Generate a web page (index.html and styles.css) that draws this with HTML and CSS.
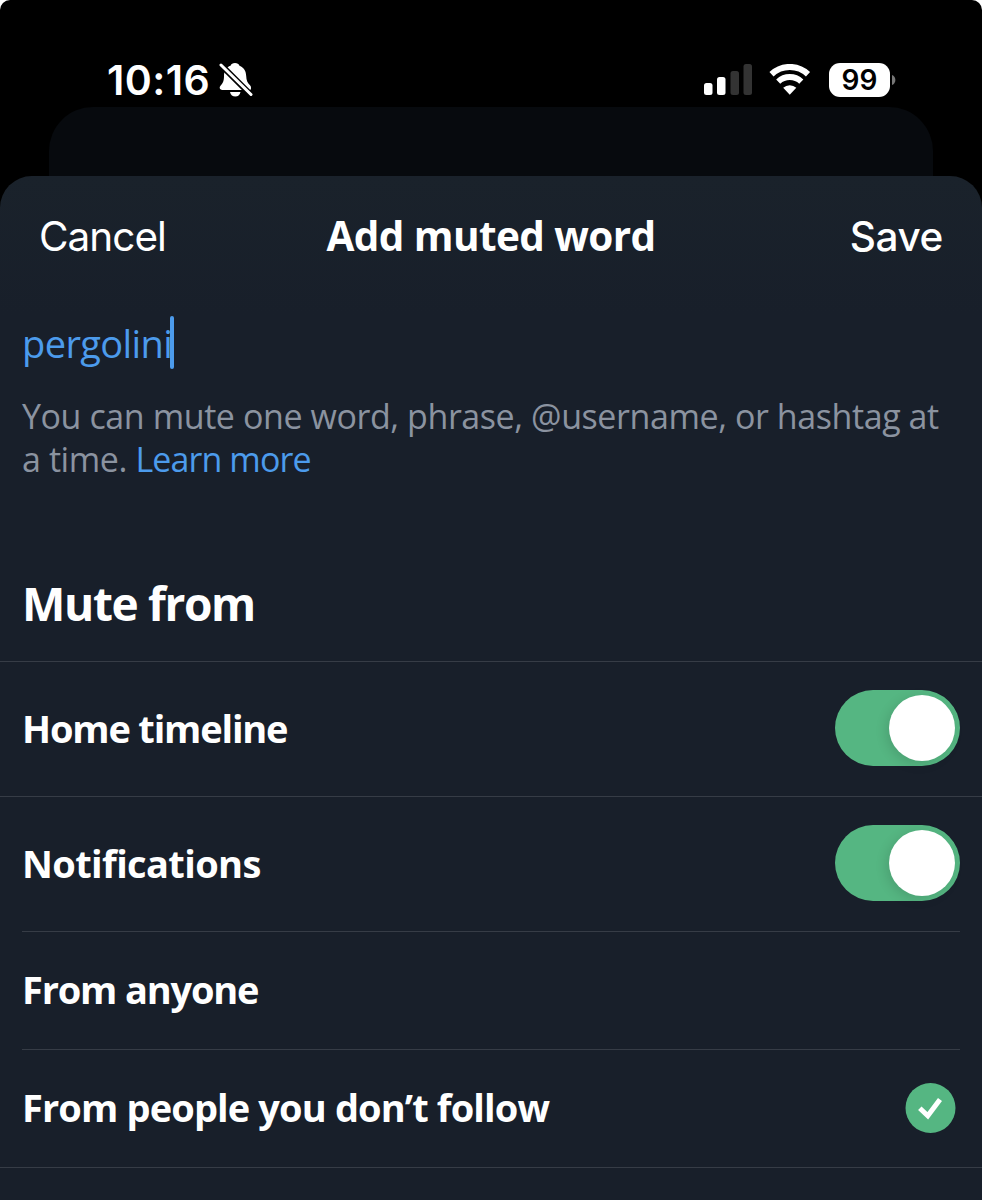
FILE: index.html
```html
<!DOCTYPE html>
<html lang="en">
<head>
    <meta charset="UTF-8">
    <meta name="viewport" content="width=device-width, initial-scale=1.0">
    <title>Add muted word</title>
    <link rel="stylesheet" href="styles.css">
</head>
<body>
    <div class="screen">
        <div class="status-bar">
            <div class="status-left">
                <span class="time">10:16</span>
                <!-- Silent mode bell -->
                <svg class="bell" width="34" height="36" viewBox="0 0 34 36">
                    <path fill="#fff" d="M16 1c2.300 0 3.800 1 4.500 2.700C25 5.500 27 9 27.200 14c.2 4.500 1.200 7 4 9.500 1.200 1.200 1.300 4.500-.8 4.500H3.500C.8 28-.2 25.800 1.500 23.800 4 21 5 19 5 14c0-5.500 2.500-9 6.500-10.300C12.200 2 13.700 1 16 1z"/>
                    <path fill="#fff" d="M11 30h10.500c-.6 3-2.600 4.600-5.200 4.600S11.600 33 11 30z"/>
                    <path stroke="#000" stroke-width="6" d="M0 1l32 32"/>
                    <path stroke="#fff" stroke-width="3" stroke-linecap="round" d="M2 3l30 29.500"/>
                </svg>
            </div>
            <div class="status-right">
                <svg class="signal" width="48" height="32" viewBox="0 0 48 32">
                    <rect x="0" y="19" width="8.500" height="12" rx="2.500" fill="#fff"/>
                    <rect x="13" y="13" width="8.500" height="18" rx="2.500" fill="#fff"/>
                    <rect x="26.500" y="7" width="8.500" height="24" rx="2.500" fill="#333"/>
                    <rect x="39.500" y="0" width="8.500" height="31" rx="2.500" fill="#333"/>
                </svg>
                <svg class="wifi" width="42" height="32" viewBox="0 0 42 32">
                    <g fill="none" stroke="#fff" stroke-width="6">
                        <path d="M2.500 10.200a26.500 26.500 0 0 1 36.500 0"/>
                        <path d="M9.200 17.600a17 17 0 0 1 23.100 0"/>
                    </g>
                    <path fill="#fff" d="M14.200 23.700a9.800 9.800 0 0 1 13.100 0l-6.550 7z"/>
                </svg>
                <div class="battery">99</div>
                <svg width="4" height="10" viewBox="0 0 4 10"><path fill="#777" d="M0 0c4.500 1.500 4.500 8.500 0 10z"/></svg>
            </div>
        </div>

        <div class="card-behind"></div>

        <div class="sheet">
            <div class="sheet-header">
                <span class="cancel">Cancel</span>
                <h1 class="title">Add muted word</h1>
                <span class="save">Save</span>
            </div>

            <div class="field">
                <span class="word">pergolini</span><span class="caret"></span>
            </div>
            <p class="hint">You can mute one word, phrase, @username, or hashtag at<br>a time. <a class="link">Learn more</a></p>

            <h2 class="section-title">Mute from</h2>

            <div class="row">
                <span class="label">Home timeline</span>
                <div class="toggle"><div class="knob"></div></div>
            </div>
            <div class="row notifications">
                <span class="label wide">Notifications</span>
                <div class="toggle"><div class="knob"></div></div>
            </div>
            <div class="option">
                <span class="label">From anyone</span>
            </div>
            <div class="option last">
                <span class="label people">From people you don’t follow</span>
                <svg width="51" height="51" viewBox="0 0 51 51">
                    <circle cx="25.500" cy="25" r="25" fill="#55b682"/>
                    <path fill="none" stroke="#fff" stroke-width="5" d="M14.800 25.300l8 7.500L35 16.500"/>
                </svg>
            </div>
        </div>
    </div>
</body>
</html>
```

FILE: styles.css
```css
body {
    margin: 0;
    background: #fff;
    font-family: 'Open Sans', 'Noto Sans', sans-serif;
    color: #fff;
}

.screen {
    height: 1200px;
    overflow: hidden;
    background: #000;
    border-radius: 10px 10px 0 0;
    white-space: nowrap;
}

/* Status bar */
.status-bar {
    display: flex;
    justify-content: space-between;
    height: 107px;
    box-sizing: border-box;
    padding: 55px 86px 0 107px;
}

.status-left, .status-right {
    display: flex;
    align-items: center;
    height: 50px;
}

.time {
    font-family: 'Inter', sans-serif;
    font-size: 41px;
    font-weight: 600;
    line-height: 50px;
    letter-spacing: 0.4px;
}

.bell {
    margin-left: 9px;
}

.signal {
    margin-right: -1px;
}

.wifi {
    margin: 0 18px;
}

.battery {
    width: 61px;
    height: 34px;
    margin-right: 2px;
    border-radius: 11px;
    background: #fff;
    color: #000;
    font: 600 28px/34px 'Inter', sans-serif;
    text-align: center;
}

.card-behind {
    height: 69px;
    margin: 0 49px;
    background: #070a0e;
    border-radius: 44px 44px 0 0;
}

/* Bottom sheet */
.sheet {
    height: 1024px;
    background: linear-gradient(#1a222b, #181f2a 140px);
    border-radius: 32px 32px 0 0;
}

.sheet-header {
    display: flex;
    align-items: center;
    height: 120px;
    padding: 0 39px;
}

.cancel, .save {
    flex: 1;
    font-family: 'Inter', sans-serif;
    font-size: 40.5px;
    letter-spacing: -1px;
}

.save {
    font-weight: 500;
    letter-spacing: -0.4px;
    text-align: right;
}

.title {
    margin: 0;
    padding-bottom: 2px;
    font-size: 40.5px;
    font-weight: 700;
    letter-spacing: -0.6px;
}

.field {
    display: flex;
    align-items: center;
    height: 53px;
    padding: 20px 22px 0;
    color: #4c9bec;
    font-size: 38px;
    letter-spacing: -0.6px;
}

.caret {
    width: 4px;
    height: 53px;
    margin-left: -2.5px;
    border-radius: 2px;
    background: #4c9bec;
}

.hint {
    margin: 26px 22px 0;
    color: #8b93a0;
    font-size: 34px;
    line-height: 42.5px;
    letter-spacing: -0.42px;
}

.link {
    color: #4c9bec;
    letter-spacing: -0.9px;
}

.section-title {
    height: 116px;
    margin: 65px 0 0;
    padding-left: 22px;
    border-bottom: 1px solid #363c46;
    font-size: 46px;
    font-weight: 700;
    line-height: 116px;
    letter-spacing: -1.35px;
}

.row, .option {
    display: flex;
    justify-content: space-between;
    align-items: center;
    height: 132px;
    padding: 0 22px 2px;
    border-bottom: 1px solid #363c46;
}

.notifications {
    margin: 0 22px;
    padding: 0 0 2px;
}

.option {
    height: 117px;
    margin: 0 22px;
    padding: 0;
}

.last {
    margin: 0;
    padding: 0 26px 0 22px;
}

.label {
    font-size: 38px;
    font-weight: 700;
    letter-spacing: -1.18px;
}

.option .label {
    padding-bottom: 3px;
}

.label.wide {
    letter-spacing: -0.62px;
}

.label.people {
    letter-spacing: -0.87px;
}

.toggle {
    display: flex;
    justify-content: flex-end;
    align-items: center;
    width: 125px;
    height: 76px;
    padding-right: 5px;
    box-sizing: border-box;
    border-radius: 38px;
    background: #55b682;
}

.knob {
    width: 66px;
    height: 66px;
    border-radius: 50%;
    background: #fff;
    box-shadow: -3px 3px 12px rgba(0, 0, 0, 0.12);
}
```
